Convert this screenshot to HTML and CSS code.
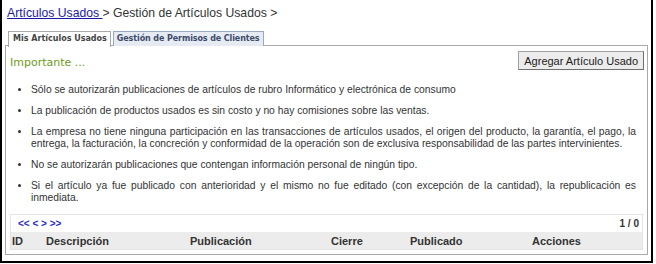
FILE: index.html
```html
<!DOCTYPE html>
<html lang="es">
<head>
<meta charset="utf-8">
<title>Gestión de Artículos Usados</title>
<link rel="stylesheet" href="styles.css">
</head>
<body>
<div class="frame">
  <div class="crumbs"><a href="#" class="crumb-link">Artículos Usados </a>&gt; Gestión de Artículos Usados &gt;</div>
  <div class="tabs">
    <div class="tab tab-active">Mis Artículos Usados</div>
    <div class="tab tab-other">Gestión de Permisos de Clientes</div>
  </div>
  <div class="panel">
    <div class="panel-head">
      <div class="important">Importante ...</div>
      <button class="btn">Agregar Artículo Usado</button>
    </div>
    <ul class="rules">
      <li>Sólo se autorizarán publicaciones de artículos de rubro Informático y electrónica de consumo</li>
      <li>La publicación de productos usados es sin costo y no hay comisiones sobre las ventas.</li>
      <li>La empresa no tiene ninguna participación en las transacciones de artículos usados, el origen del producto, la garantía, el pago, la entrega, la facturación, la concreción y conformidad de la operación son de exclusiva responsabilidad de las partes intervinientes.</li>
      <li>No se autorizarán publicaciones que contengan información personal de ningún tipo.</li>
      <li>Si el artículo ya fue publicado con anterioridad y el mismo no fue editado (con excepción de la cantidad), la republicación es inmediata.</li>
    </ul>
    <div class="grid-box">
      <div class="pager">
        <div class="pager-links"><a href="#">&lt;&lt;</a> <a href="#">&lt;</a> <a href="#">&gt;</a> <a href="#">&gt;&gt;</a></div>
        <div class="pager-count">1 / 0</div>
      </div>
      <div class="grid-head">
        <div class="c-id">ID</div>
        <div class="c-desc">Descripción</div>
        <div class="c-pub">Publicación</div>
        <div class="c-cierre">Cierre</div>
        <div class="c-publicado">Publicado</div>
        <div class="c-acc">Acciones</div>
      </div>
    </div>
  </div>
</div>
</body>
</html>
```
FILE: styles.css
```css
html, body { margin: 0; padding: 0; background: #fff; }
body { width: 656px; height: 264px; overflow: hidden; font-family: "Liberation Sans", Arial, sans-serif; color: #333; }
.frame {
  width: 646px;
  height: 261px;
  border-left: 2px solid #000;
  border-right: 2px solid #000;
  border-bottom: 2px solid #000;
  padding: 0 0 0 3px;
  box-sizing: content-box;
}
.crumbs { font-size: 12.2px; padding: 6px 0 0 2px; height: 25px; color: #333; box-sizing: content-box; line-height: 15px; }
.crumb-link { color: #1a1aa6; text-decoration: underline; }
.tabs { display: flex; gap: 2px; padding-left: 3px; height: 15px; }
.tab {
  font-family: "DejaVu Sans", Verdana, sans-serif; font-weight: bold; font-size: 8px;
  line-height: 14px; padding: 0 4px; border: 1px solid #a9a9a9; border-bottom: none;
}
.tab-active { background: #fff; color: #444; position: relative; z-index: 1; height: 15px; padding: 0 3px 0 4px; }
.tab-other { background: #e6eaf2; color: #3e4c6a; border-color: #99a6c4; height: 14px; padding: 0 3px; letter-spacing: -0.1px; }
.panel {
  border: 1px solid #a9a9a9; width: 643px; height: 210px; margin-top: -1px; box-sizing: border-box;
  padding: 4px 3px 0 4px;
}
.panel-head { display: flex; justify-content: space-between; align-items: flex-start; height: 34px; }
.important { font-family: "DejaVu Sans", Verdana, sans-serif; font-size: 11px; color: #6f9a22; padding-top: 6px; }
.btn {
  font-family: "Liberation Sans", Arial, sans-serif; font-size: 11px; color: #222;
  background: #ececec; border: 1px solid #a0a0a0; border-right-color: #707070; border-bottom-color: #707070;
  height: 19px; padding: 0 5px; margin-top: 1px;
}
.rules { margin: 0; padding: 0 8px 0 21px; font-size: 10.3px; line-height: 12px; color: #333; list-style: disc; }
.rules li { margin-bottom: 9px; text-align: justify; }
.grid-box { border: 1px solid #e4e4e4; margin: 10px 0 0 0; width: 631px; }
.pager { display: flex; justify-content: space-between; height: 17px; align-items: center; padding: 0 3px 0 7px; font-size: 10px; font-weight: bold; }
.pager-links a { color: #2b2bc8; text-decoration: none; }
.pager-count { color: #333; }
.grid-head { display: flex; background: #ececec; height: 17px; align-items: center; font-size: 11px; font-weight: bold; color: #333; }
.c-id { width: 34px; padding-left: 1px; }
.c-desc { width: 144px; }
.c-pub { width: 141px; }
.c-cierre { width: 79px; }
.c-publicado { width: 122px; }
.c-acc { width: 90px; }
```
